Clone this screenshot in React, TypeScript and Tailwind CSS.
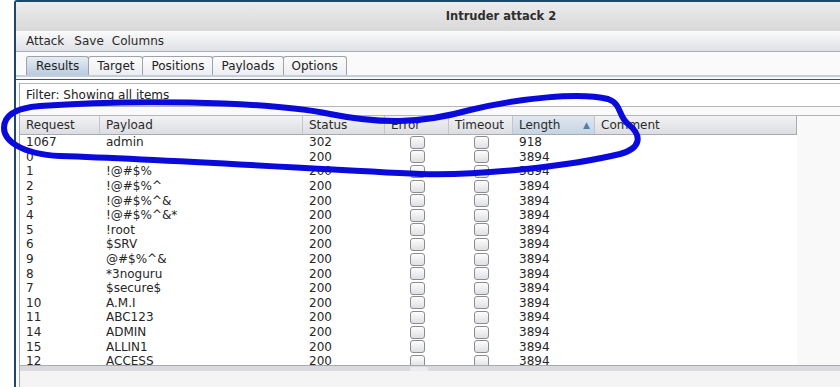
import React from "react";

type Row = { req: string; payload: string; status: string; length: string };

const rows: Row[] = [
  { req: "1067", payload: "admin", status: "302", length: "918" },
  { req: "0", payload: "", status: "200", length: "3894" },
  { req: "1", payload: "!@#$%", status: "200", length: "3894" },
  { req: "2", payload: "!@#$%^", status: "200", length: "3894" },
  { req: "3", payload: "!@#$%^&", status: "200", length: "3894" },
  { req: "4", payload: "!@#$%^&*", status: "200", length: "3894" },
  { req: "5", payload: "!root", status: "200", length: "3894" },
  { req: "6", payload: "$SRV", status: "200", length: "3894" },
  { req: "9", payload: "@#$%^&", status: "200", length: "3894" },
  { req: "8", payload: "*3noguru", status: "200", length: "3894" },
  { req: "7", payload: "$secure$", status: "200", length: "3894" },
  { req: "10", payload: "A.M.I", status: "200", length: "3894" },
  { req: "11", payload: "ABC123", status: "200", length: "3894" },
  { req: "14", payload: "ADMIN", status: "200", length: "3894" },
  { req: "15", payload: "ALLIN1", status: "200", length: "3894" },
  { req: "12", payload: "ACCESS", status: "200", length: "3894" },
];

const tabs = ["Results", "Target", "Positions", "Payloads", "Options"];

const cols = "grid grid-cols-[80px_203px_82px_64px_64px_82px_202px]";

function Check() {
  return (
    <div className="flex h-full items-center justify-center">
      <div className="h-[13px] w-[15px] rounded-[3px] border border-[#8a8c92] bg-gradient-to-b from-[#fdfdfd] to-[#dfe0e3]" />
    </div>
  );
}

function HeaderCell({ label, sorted, last }: { label: string; sorted?: boolean; last?: boolean }) {
  return (
    <div
      className={
        "flex items-center justify-between pl-[6px] pr-[4px] " +
        (last ? "border-r border-[#a9abb1] " : "border-r border-[#c3c5ca] ") +
        (sorted
          ? "bg-gradient-to-b from-[#dfe7ef] to-[#c6d4e2]"
          : "bg-gradient-to-b from-[#f3f3f5] to-[#dcdde2]")
      }
    >
      <span>{label}</span>
      {sorted && <span className="text-[9px] text-[#4d7fae]">▲</span>}
    </div>
  );
}

export default function App() {
  return (
    <div
      className="relative flex h-[387px] w-[840px] overflow-hidden bg-white text-[12px] leading-none text-[#222]"
      style={{ fontFamily: '"DejaVu Sans", "Liberation Sans", sans-serif' }}
    >
      <div className="w-[14px] shrink-0 bg-white" />
      <div className="flex flex-1 flex-col rounded-tl-[3px] border-l-2 border-t-2 border-[#1d4868] bg-[#fafafa]">
        {/* title bar */}
        <div className="flex h-[29px] shrink-0 items-center justify-center bg-gradient-to-b from-[#ececec] to-[#d8d8d8] pl-[146px]">
          <span className="text-[11.5px] font-bold text-[#2e2e2e]">Intruder attack 2</span>
        </div>
        {/* menu bar */}
        <div className="flex h-[21px] shrink-0 items-center border-b border-[#a9adb5] bg-gradient-to-b from-[#fbfbfb] to-[#dfe1e6] pl-[10px] text-[#2a2a2a]">
          <span>Attack</span>
          <span className="ml-[10px]">Save</span>
          <span className="ml-[8px]">Columns</span>
        </div>
        {/* tabs */}
        <div className="flex h-[23px] shrink-0 items-end pl-[10px]">
          {tabs.map((t, i) => (
            <div
              key={t}
              className={
                "flex h-[19px] items-center rounded-t-[3px] border border-b-0 border-[#9ea3ab] " +
                (i === 0
                  ? "bg-gradient-to-b from-[#e6edf4] to-[#b9cbdd] px-[9px] text-[#1f1f1f]"
                  : "-ml-px bg-gradient-to-b from-[#fcfcfc] to-[#eceef1] px-[8px]")
              }
            >
              {t}
            </div>
          ))}
        </div>
        <div className="h-[2px] shrink-0 bg-[#c4cedd]" />
        <div className="h-[2px] shrink-0 bg-[#fafafa]" />
        <div className="h-px shrink-0 bg-[#4a525c]" />
        <div className="h-[3px] shrink-0 bg-white" />
        {/* panel */}
        <div className="ml-[3px] flex flex-1 flex-col border-l border-[#a6a8ad]">
          <div className="flex h-[24px] shrink-0 items-center border-t border-b border-[#b4b6bb] bg-white pl-[6px]">
            Filter: Showing all items
          </div>
          <div className="h-[8px] shrink-0 bg-[#fafafa]" />
          <div className="flex h-[250px] shrink-0 overflow-hidden border-t border-[#b4b6bb]">
            <div className="w-[777px] shrink-0 bg-white">
              <div className={cols + " h-[19px] border-b border-[#a9abb1] text-[#2a2a2a]"}>
                <HeaderCell label="Request" />
                <HeaderCell label="Payload" />
                <HeaderCell label="Status" />
                <HeaderCell label="Error" />
                <HeaderCell label="Timeout" />
                <HeaderCell label="Length" sorted />
                <HeaderCell label="Comment" last />
              </div>
              {rows.map((r) => (
                <div key={r.req} className={cols + " h-[14.6px] text-[#262626]"}>
                  <div className="flex items-center pl-[6px]">{r.req}</div>
                  <div className="flex items-center pl-[6px]">{r.payload}</div>
                  <div className="flex items-center pl-[6px]">{r.status}</div>
                  <Check />
                  <Check />
                  <div className="flex items-center pl-[6px]">{r.length}</div>
                  <div />
                </div>
              ))}
            </div>
            <div className="flex-1 bg-[#f9f9f9]" />
          </div>
          <div className="h-px shrink-0 bg-[#a8aaaf]" />
          <div className="flex h-[5px] shrink-0 justify-center bg-[#d9dadd]">
            <div className="ml-[-22px] mt-[1px] h-[4px] w-[18px] rounded-t-[2px] bg-[#ececee]" />
          </div>
          <div className="flex-1 bg-[#f4f4f4]" />
        </div>
      </div>

      {/* hand-drawn annotation */}
      <svg className="pointer-events-none absolute left-0 top-0" width="840" height="387">
        <path
          d="M 40 106 C 120 100, 260 100, 330 114 C 380 124, 420 124, 470 110 C 520 98, 580 92, 608 99 C 622 104, 618 116, 628 124 C 642 135, 642 148, 620 154 C 570 166, 480 176, 420 174 C 330 170, 180 160, 60 156 C 20 154, 4 140, 4 128 C 4 116, 14 108, 40 106 Z"
          fill="none"
          stroke="#0a0adc"
          strokeWidth="6"
          strokeLinecap="round"
          strokeLinejoin="round"
        />
      </svg>
    </div>
  );
}
